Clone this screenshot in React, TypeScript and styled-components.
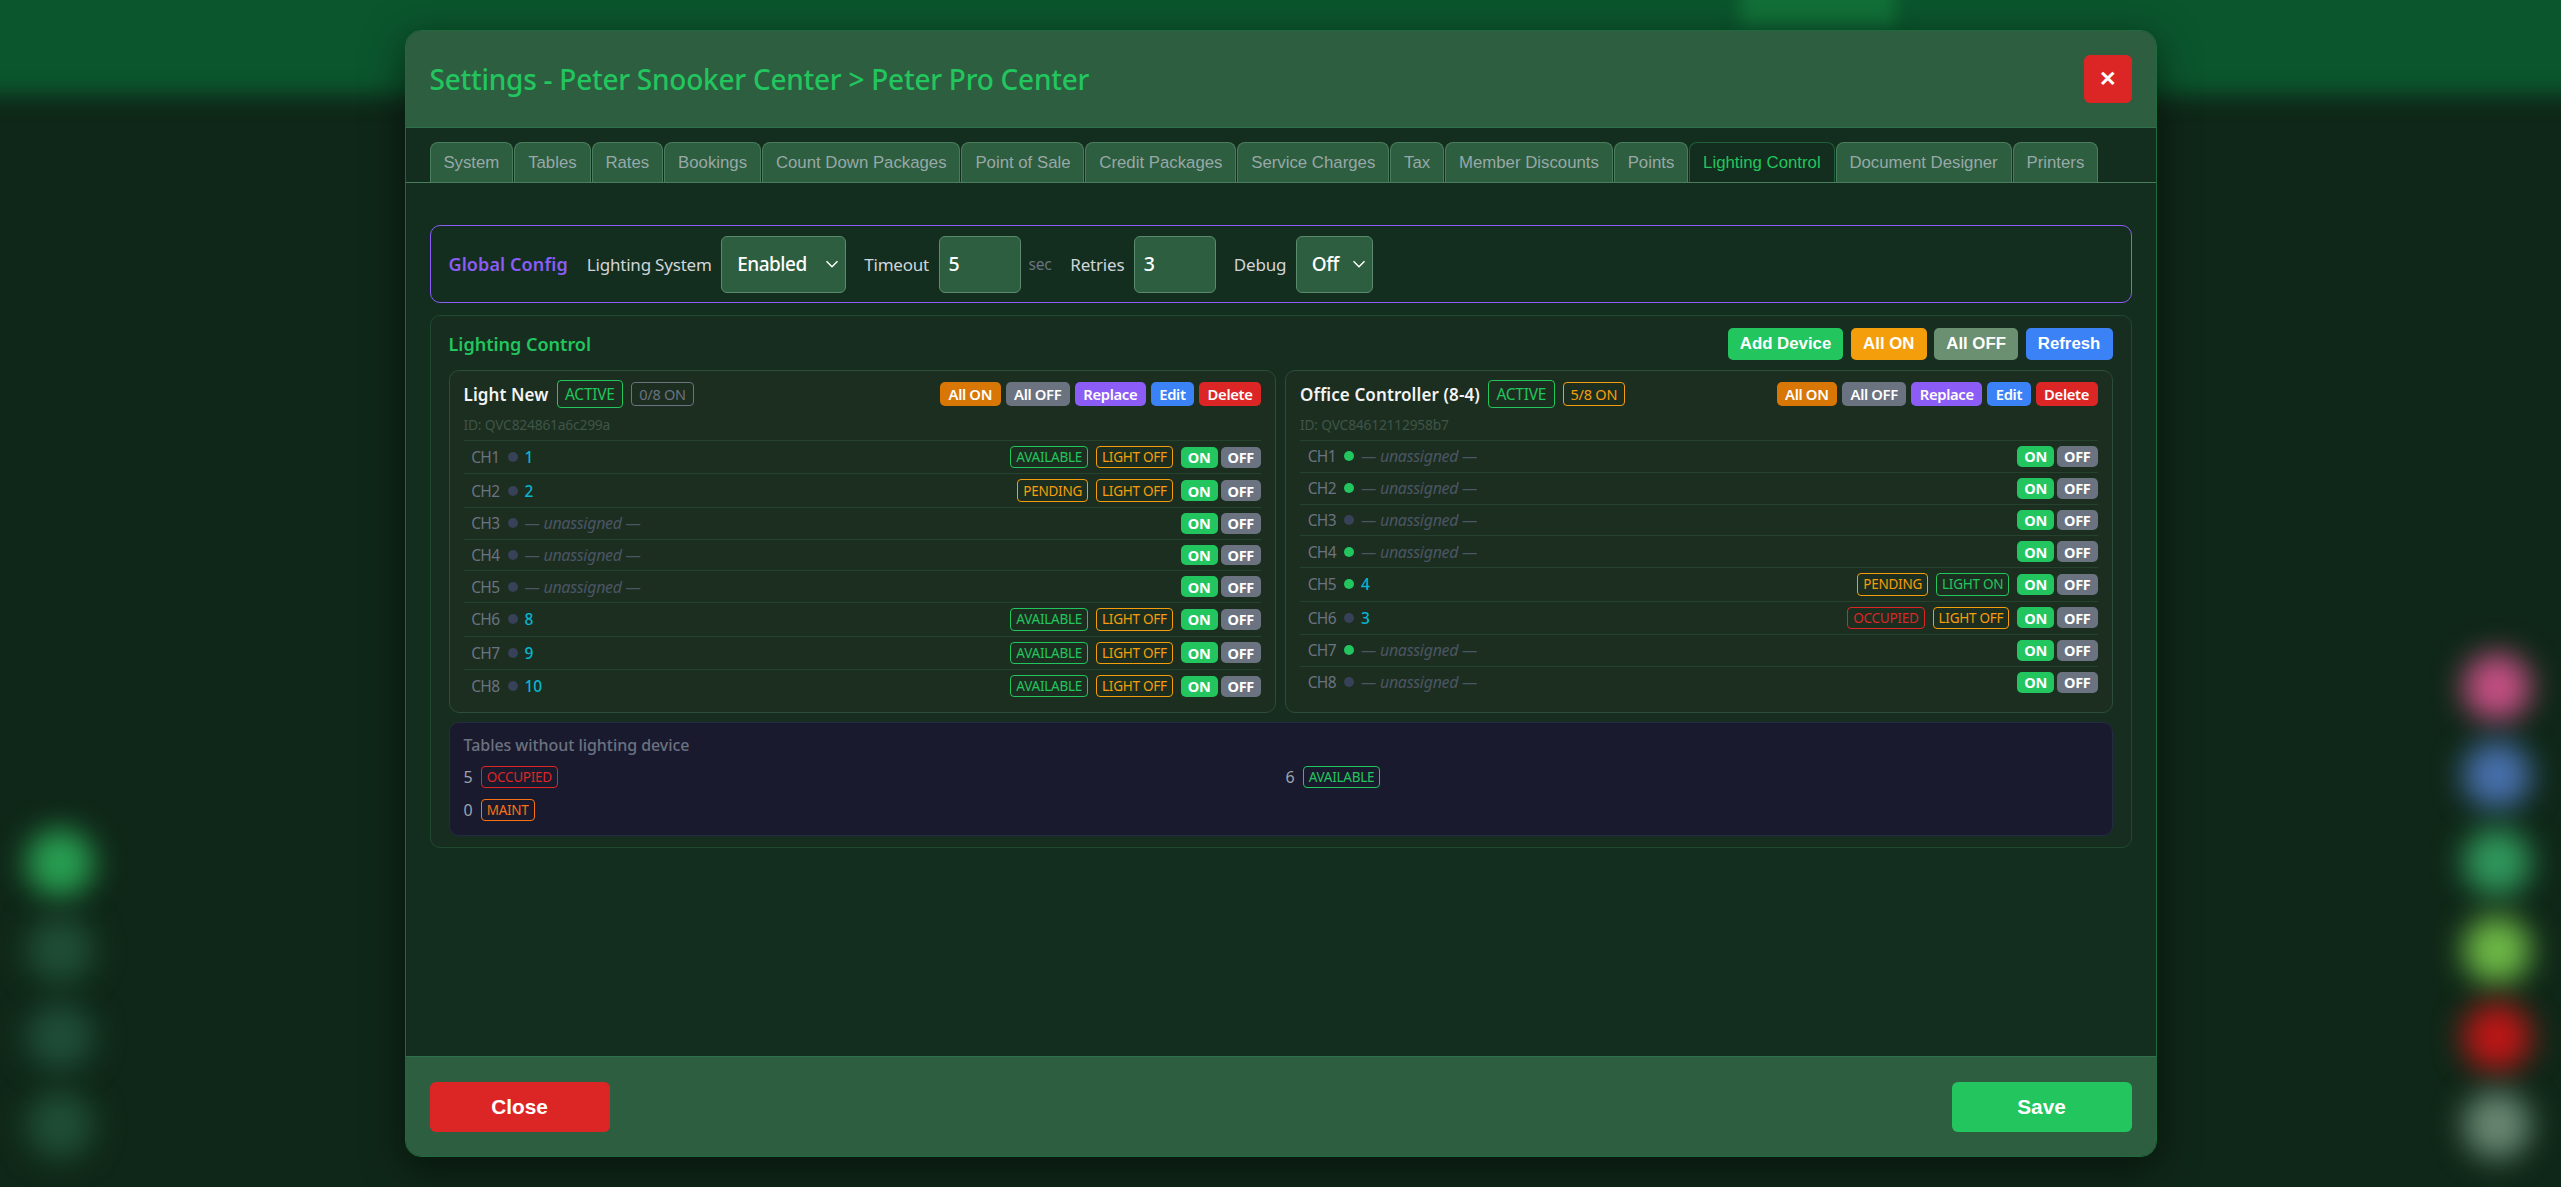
import React from "react";
import styled, { createGlobalStyle } from "styled-components";

const UI = `"Noto Sans", "Open Sans", sans-serif`;
const ARIAL = `"Liberation Sans", Arial, sans-serif`;
const CHEVRON = `url("data:image/svg+xml,%3Csvg xmlns='http://www.w3.org/2000/svg' width='14' height='8' viewBox='0 0 14 8'%3E%3Cpath d='M1.5 1.2 7 6.7l5.5-5.5' fill='none' stroke='%23fff' stroke-width='1.5'/%3E%3C/svg%3E")`;

const Global = createGlobalStyle`
  * { box-sizing: border-box; }
  html, body { margin: 0; height: 100%; overflow: hidden; background: #0f2818; font-family: ${UI}; }
`;

const Backdrop = styled.div`
  position: fixed; inset: 0; overflow: hidden; background: #0f2718;
`;
const TopBand = styled.div`
  position: absolute; left: -40px; right: -40px; top: -40px; height: 135px;
  background: #0b562d; filter: blur(11px);
`;
const TopGlow = styled.div`
  position: absolute; left: 1740px; width: 155px; top: -30px; height: 56px;
  background: #127038; filter: blur(8px);
`;
const Blob = styled.div<{ $x: number; $y: number; $c: string }>`
  position: absolute; width: 68px; height: 68px; border-radius: 50%;
  left: ${p => p.$x - 34}px; top: ${p => p.$y - 34}px;
  background: ${p => p.$c}; filter: blur(15px);
`;
const Overlay = styled.div`
  position: fixed; inset: 0; display: flex; align-items: center; justify-content: center;
`;
const Modal = styled.div`
  width: 1752px; height: 1127px; display: flex; flex-direction: column; overflow: hidden;
  background: #132e1e; border: 1px solid #1f6b3d; border-radius: 16px;
  box-shadow: 0 10px 40px rgba(0,0,0,.5);
`;
const Header = styled.header`
  height: 97px; flex: none; display: flex; align-items: center; justify-content: space-between;
  padding: 0 24px; background: #2d5e3f; border-bottom: 1px solid #2f7149;
`;
const Title = styled.h2`
  margin: 0; font: 500 28px ${UI}; letter-spacing: -0.25px; color: #22c55e;
`;
const CloseX = styled.button`
  width: 48px; height: 48px; border: 0; border-radius: 6px; background: #dc2626; color: #fff;
  font: 700 21px ${ARIAL}; padding: 0; display: flex; align-items: center; justify-content: center;
`;
const TabBar = styled.nav`
  flex: none; display: flex; gap: 1px; padding: 14px 24px 0; border-bottom: 1px solid #4a7c5e;
`;
const Tab = styled.div<{ $active?: boolean }>`
  height: 40px; padding: 0 12.9px; display: flex; align-items: center;
  font: 400 16.8px ${ARIAL}; white-space: nowrap;
  border: 1px solid ${p => (p.$active ? "#1f5f39" : "#4a7c5e")}; border-bottom: 0;
  border-radius: 8px 8px 0 0;
  background: ${p => (p.$active ? "#132e1e" : "#2d5e3f")};
  color: ${p => (p.$active ? "#22c55e" : "#98a8a8")};
`;
const Body = styled.main`
  flex: 1; min-height: 0; padding: 42px 24px 0; display: flex; flex-direction: column; gap: 12px;
`;
const GlobalBox = styled.section`
  height: 78px; flex: none; display: flex; align-items: center; padding: 0 18px;
  border: 1.5px solid #8b5cf6; border-radius: 10px;
`;
const GlobalTitle = styled.span`
  font: 600 18px ${UI}; letter-spacing: 0.1px; color: #8b5cf6; margin-right: 19px;
`;
const FieldLabel = styled.span<{ $ml?: number }>`
  font: 400 17px ${UI}; letter-spacing: -0.2px; color: #d1d5db; margin-right: 9.5px;
  margin-left: ${p => p.$ml ?? 0}px; white-space: nowrap;
`;
const Select = styled.select<{ $w: number }>`
  appearance: none; width: ${p => p.$w}px; height: 57px; padding: 0 24px 0 15px;
  border: 1px solid #5b8a6e; border-radius: 6px; outline: none;
  background: #2d5e3f ${CHEVRON} no-repeat right 6px center;
  color: #fff; font: 500 19px ${UI}; letter-spacing: -.5px;
`;
const NumInput = styled.input`
  width: 82px; height: 57px; padding: 0 9px 2px; border: 1px solid #5b8a6e; border-radius: 6px;
  background: #2d5e3f; color: #fff; font: 500 19.5px ${UI}; outline: none;
`;
const Unit = styled.span`
  font: 400 15.5px ${UI}; letter-spacing: -.3px; color: #6b7280; margin-left: 8px;
`;
const Panel = styled.section`
  height: 533px; flex: none; padding: 12px 18px; background: #162d20;
  border: 1px solid #1f4a30; border-radius: 10px;
`;
const PanelHead = styled.div`
  height: 32px; display: flex; align-items: center; justify-content: space-between; margin-bottom: 10px;
`;
const PanelTitle = styled.h3`
  margin: 0; font: 600 18px ${UI}; color: #22c55e;
`;
const PanelActions = styled.div`
  display: flex; gap: 7.5px;
`;
const BigBtn = styled.button<{ $c: string }>`
  height: 32px; padding: 0 12.2px; border: 0; border-radius: 5px; background: ${p => p.$c};
  color: #fff; font: 700 16.8px ${ARIAL}; white-space: nowrap;
`;
const Cards = styled.div`
  display: grid; grid-template-columns: 1fr 1fr; gap: 9px;
`;
const Card = styled.article`
  height: 343px; padding: 9px 14px; background: #1c2e20; border: 1px solid #2c4d38; border-radius: 10px;
`;
const CardHead = styled.div`
  height: 28px; display: flex; align-items: center;
`;
const CardName = styled.span`
  font: 600 17px ${UI}; letter-spacing: 0.1px; color: #f3f4f6; margin-right: 8px; white-space: nowrap;
`;
const Pill = styled.span<{ $c: string; $h?: number; $fs?: number; $px?: number }>`
  display: inline-flex; align-items: center; height: ${p => p.$h ?? 22.4}px; padding: 0 ${p => p.$px ?? 5}px;
  border: 1px solid ${p => p.$c}; border-radius: 4px; color: ${p => p.$c};
  font: 400 ${p => p.$fs ?? 13.5}px ${UI}; letter-spacing: -0.25px; white-space: nowrap;
`;
const HeadBadges = styled.div`
  display: flex; align-items: center; gap: 8px;
`;
const CardActions = styled.div`
  margin-left: auto; display: flex; gap: 5px;
`;
const SmallBtn = styled.button<{ $c: string }>`
  height: 24px; padding: 0 8.5px; border: 0; border-radius: 5px; background: ${p => p.$c};
  color: #fff; font: 600 14.8px ${UI}; letter-spacing: -0.35px; white-space: nowrap;
`;
const DeviceId = styled.div`
  margin: 8px 0 6px; height: 18px; font: 400 13.8px/18px ${UI}; letter-spacing: -0.2px; color: #3f5548;
`;
const Row = styled.div`
  display: flex; align-items: center; padding: 5px 0; border-top: 1px solid #24422e;
`;
const ChLabel = styled.span`
  width: 36px; text-align: right; font: 400 15.5px/20px ${UI}; letter-spacing: -0.6px; color: #6b7280;
`;
const Dot = styled.span<{ $on?: boolean }>`
  width: 10px; height: 10px; border-radius: 50%; margin: 0 7px 0 8px; flex: none;
  background: ${p => (p.$on ? "#22c55e" : "#374158")};
`;
const TableName = styled.span`
  font: 500 15.5px/20px ${UI}; color: #06b6d4;
`;
const Unassigned = styled.span`
  font: italic 400 16px/20px ${UI}; letter-spacing: -0.3px; color: #4b5563;
`;
const RowRight = styled.div`
  margin-left: auto; display: flex; align-items: center; gap: 8px;
`;
const Toggle = styled.div`
  display: flex; gap: 3px;
`;
const ToggleBtn = styled.button<{ $c: string }>`
  height: 20.8px; padding: 0 7px; border: 0; border-radius: 5px; background: ${p => p.$c};
  color: #fff; font: 700 14.5px ${UI}; letter-spacing: -0.3px; display: flex; align-items: center;
`;
const Unlinked = styled.section`
  margin-top: 9px; height: 114.4px; padding: 12px 14px; background: #1a1a2e;
  border: 1px solid #252a45; border-radius: 10px;
`;
const UnlinkedTitle = styled.div`
  height: 20px; margin-bottom: 11px; font: 500 16px/20px ${UI}; letter-spacing: -0.05px; color: #6b7280;
`;
const UnlinkedGrid = styled.div`
  display: grid; grid-template-columns: 1fr 1fr; gap: 10.5px 10px;
`;
const UnlinkedItem = styled.div`
  display: flex; align-items: center; gap: 8px; font: 400 16px ${UI}; color: #9ca3af;
`;
const Footer = styled.footer`
  margin-top: auto; height: 100px; flex: none; display: flex; align-items: center; justify-content: space-between;
  padding: 0 24px; background: #2d5e3f; border-top: 1px solid #2f7149;
`;
const FootBtn = styled.button<{ $c: string }>`
  width: 180px; height: 50px; border: 0; border-radius: 6px; background: ${p => p.$c};
  color: #fff; font: 700 20.8px ${ARIAL};
`;

const tabs = ["System","Tables","Rates","Bookings","Count Down Packages","Point of Sale","Credit Packages","Service Charges","Tax","Member Discounts","Points","Lighting Control","Document Designer","Printers"];

const GREEN = "#22c55e", AMBER = "#f59e0b", RED = "#dc2626", GRAY = "#6b7280", ORANGE = "#f97316";
const statusColor: Record<string, string> = { AVAILABLE: GREEN, PENDING: AMBER, OCCUPIED: RED, MAINT: ORANGE };

type Ch = { on?: boolean; name?: string; status?: string; light?: "LIGHT ON" | "LIGHT OFF" };
type Device = { name: string; count: string; countColor: string; id: string; channels: Ch[] };

const devices: Device[] = [
  { name: "Light New", count: "0/8 ON", countColor: GRAY, id: "ID: QVC824861a6c299a", channels: [
    { name: "1", status: "AVAILABLE", light: "LIGHT OFF" },
    { name: "2", status: "PENDING", light: "LIGHT OFF" },
    {}, {}, {},
    { name: "8", status: "AVAILABLE", light: "LIGHT OFF" },
    { name: "9", status: "AVAILABLE", light: "LIGHT OFF" },
    { name: "10", status: "AVAILABLE", light: "LIGHT OFF" },
  ]},
  { name: "Office Controller (8-4)", count: "5/8 ON", countColor: AMBER, id: "ID: QVC84612112958b7", channels: [
    { on: true }, { on: true }, {}, { on: true },
    { on: true, name: "4", status: "PENDING", light: "LIGHT ON" },
    { name: "3", status: "OCCUPIED", light: "LIGHT OFF" },
    { on: true }, {},
  ]},
];

const blobs = [
  { x: 60, y: 863, c: "#28a052" }, { x: 60, y: 950, c: "#1f4e35" }, { x: 60, y: 1037, c: "#1f4e38" }, { x: 60, y: 1125, c: "#1f4e35" },
  { x: 2497, y: 687, c: "#c44f83" }, { x: 2497, y: 775, c: "#4870ad" }, { x: 2497, y: 862, c: "#30985c" },
  { x: 2497, y: 950, c: "#6eb946" }, { x: 2497, y: 1037, c: "#bd1616" }, { x: 2497, y: 1125, c: "#688772" },
];

export default function App() {
  return (
    <>
      <Global />
      <Backdrop>
        <TopBand />
        <TopGlow />
        {blobs.map((b, i) => <Blob key={i} $x={b.x} $y={b.y} $c={b.c} />)}
      </Backdrop>
      <Overlay>
        <Modal>
          <Header>
            <Title>Settings - Peter Snooker Center &gt; Peter Pro Center</Title>
            <CloseX>✕</CloseX>
          </Header>
          <TabBar>
            {tabs.map(t => <Tab key={t} $active={t === "Lighting Control"}>{t}</Tab>)}
          </TabBar>
          <Body>
            <GlobalBox>
              <GlobalTitle>Global Config</GlobalTitle>
              <FieldLabel>Lighting System</FieldLabel>
              <Select $w={125} defaultValue="Enabled"><option>Enabled</option><option>Disabled</option></Select>
              <FieldLabel $ml={18}>Timeout</FieldLabel>
              <NumInput defaultValue="5" />
              <Unit>sec</Unit>
              <FieldLabel $ml={19}>Retries</FieldLabel>
              <NumInput defaultValue="3" />
              <FieldLabel $ml={18}>Debug</FieldLabel>
              <Select $w={77} defaultValue="Off"><option>Off</option><option>On</option></Select>
            </GlobalBox>
            <Panel>
              <PanelHead>
                <PanelTitle>Lighting Control</PanelTitle>
                <PanelActions>
                  <BigBtn $c="#22c55e">Add Device</BigBtn>
                  <BigBtn $c="#f59e0b">All ON</BigBtn>
                  <BigBtn $c="#6b8f71">All OFF</BigBtn>
                  <BigBtn $c="#3b82f6">Refresh</BigBtn>
                </PanelActions>
              </PanelHead>
              <Cards>
                {devices.map(d => (
                  <Card key={d.id}>
                    <CardHead>
                      <CardName>{d.name}</CardName>
                      <HeadBadges>
                        <Pill $c={GREEN} $h={28} $fs={15.5} $px={7.5}>ACTIVE</Pill>
                        <Pill $c={d.countColor} $h={24} $fs={14.5} $px={7}>{d.count}</Pill>
                      </HeadBadges>
                      <CardActions>
                        <SmallBtn $c="#d97706">All ON</SmallBtn>
                        <SmallBtn $c="#6b7280">All OFF</SmallBtn>
                        <SmallBtn $c="#8b5cf6">Replace</SmallBtn>
                        <SmallBtn $c="#3b82f6">Edit</SmallBtn>
                        <SmallBtn $c="#dc2626">Delete</SmallBtn>
                      </CardActions>
                    </CardHead>
                    <DeviceId>{d.id}</DeviceId>
                    {d.channels.map((c, i) => (
                      <Row key={i}>
                        <ChLabel>CH{i + 1}</ChLabel>
                        <Dot $on={c.on} />
                        {c.name ? <TableName>{c.name}</TableName> : <Unassigned>— unassigned —</Unassigned>}
                        <RowRight>
                          {c.status && <Pill $c={statusColor[c.status]}>{c.status}</Pill>}
                          {c.light && <Pill $c={c.light === "LIGHT ON" ? GREEN : AMBER}>{c.light}</Pill>}
                          <Toggle>
                            <ToggleBtn $c="#22c55e">ON</ToggleBtn>
                            <ToggleBtn $c="#6b7280">OFF</ToggleBtn>
                          </Toggle>
                        </RowRight>
                      </Row>
                    ))}
                  </Card>
                ))}
              </Cards>
              <Unlinked>
                <UnlinkedTitle>Tables without lighting device</UnlinkedTitle>
                <UnlinkedGrid>
                  <UnlinkedItem>5 <Pill $c={statusColor.OCCUPIED}>OCCUPIED</Pill></UnlinkedItem>
                  <UnlinkedItem>6 <Pill $c={statusColor.AVAILABLE}>AVAILABLE</Pill></UnlinkedItem>
                  <UnlinkedItem>0 <Pill $c={statusColor.MAINT}>MAINT</Pill></UnlinkedItem>
                </UnlinkedGrid>
              </Unlinked>
            </Panel>
          </Body>
          <Footer>
            <FootBtn $c="#dc2626">Close</FootBtn>
            <FootBtn $c="#22c55e">Save</FootBtn>
          </Footer>
        </Modal>
      </Overlay>
    </>
  );
}
